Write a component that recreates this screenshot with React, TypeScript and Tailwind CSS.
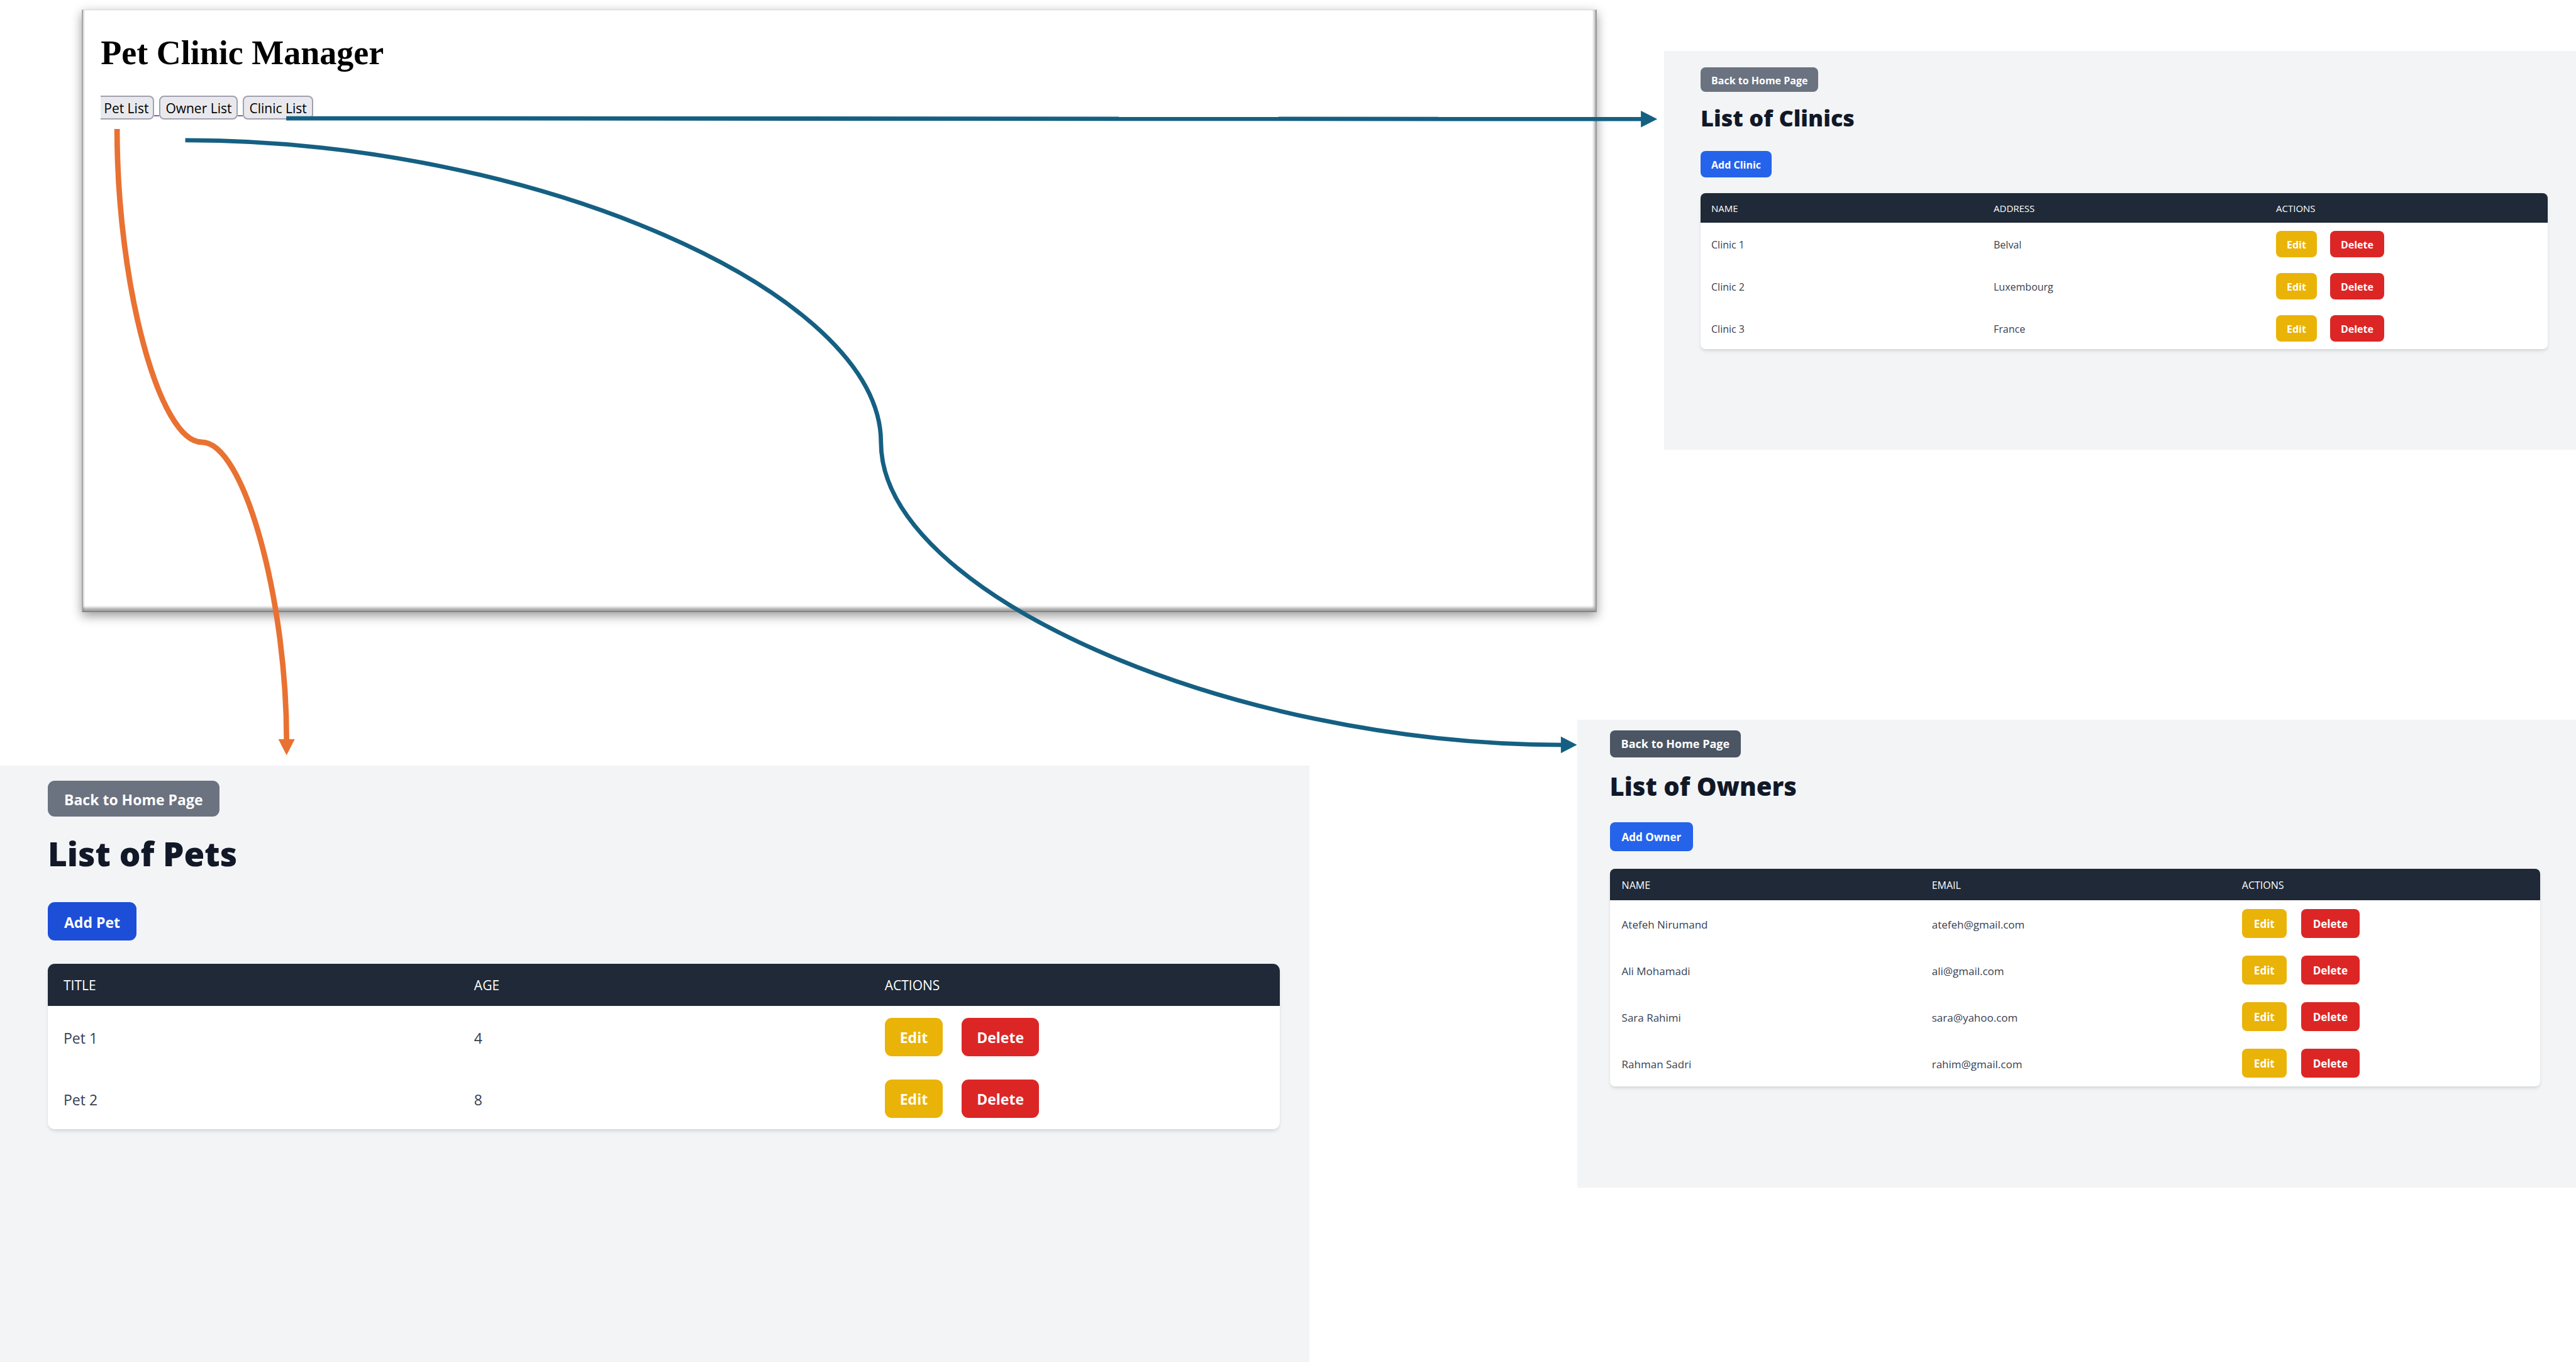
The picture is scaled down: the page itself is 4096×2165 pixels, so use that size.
type Scale = {
  panel: string;
  back: string;
  title: string;
  add: string;
  table: string;
  th: string;
  td: string;
  actionCell: string;
  actions: string;
  action: string;
};

type ListPageProps = {
  title: string;
  addLabel: string;
  columns: string[];
  rows: string[][];
  size: Scale;
};

const clinicSize: Scale = {
  panel: "w-[35.4%] min-h-[634px] mt-[81px] pt-[26px] pl-[58px] pr-[45px]",
  back: "h-[39px] px-[17px] pt-[2px] text-[16px] rounded-[8px] bg-[#6b7280]",
  title: "mt-[18px] text-[36px] leading-[48px]",
  add: "mt-[28px] h-[42px] px-[17px] pt-[2px] text-[16px] rounded-[8px] bg-[#2563eb]",
  table: "mt-[25px] rounded-[8px]",
  th: "h-[47px] px-[17px] pt-[2px] text-[15px]",
  td: "h-[67px] px-[17px] pt-[3px] text-[16px]",
  actionCell: "h-[67px] px-[17px]",
  actions: "gap-[21px]",
  action: "h-[42px] px-[17px] pt-[2px] text-[16px] rounded-[8px]",
};

const ownerSize: Scale = {
  panel: "w-[38.78%] min-h-[744px] pt-[17px] pl-[52px] pr-[57px]",
  back: "h-[43px] px-[18px] text-[18px] rounded-[8px] bg-[#4b5563]",
  title: "mt-[21px] text-[40px] leading-[50px]",
  add: "mt-[32px] h-[46px] px-[19px] pt-[2px] text-[17px] rounded-[8px] bg-[#2563eb]",
  table: "mt-[28px] rounded-[8px]",
  th: "h-[50px] px-[19px] pt-[2px] text-[16px]",
  td: "h-[74px] px-[19px] pt-[3px] text-[17px]",
  actionCell: "h-[74px] px-[19px]",
  actions: "gap-[23px]",
  action: "h-[46px] px-[19px] pt-[2px] text-[17px] rounded-[8px]",
};

const petSize: Scale = {
  panel: "w-[50.82%] min-h-[948px] mt-[73px] pt-[24px] pl-[76px] pr-[47px]",
  back: "h-[57px] px-[26px] pt-[3px] text-[23px] rounded-[11px] bg-[#6b7280]",
  title: "mt-[26px] text-[53px] leading-[66px]",
  add: "mt-[44px] h-[61px] px-[26px] pt-[3px] text-[23px] rounded-[11px] bg-[#1d4ed8]",
  table: "mt-[37px] rounded-[11px]",
  th: "h-[67px] px-[25px] pt-[3px] text-[21px]",
  td: "h-[98px] px-[25px] pt-[4px] text-[23px]",
  actionCell: "h-[98px] px-[25px]",
  actions: "gap-[30px]",
  action: "h-[61px] px-[24px] pt-[3px] text-[23px] rounded-[11px]",
};

function ListPage({ title, addLabel, columns, rows, size }: ListPageProps) {
  return (
    <section
      className={`flex flex-col items-start bg-[#f3f4f6] font-['Open_Sans',sans-serif] ${size.panel}`}
    >
      <button type="button" className={`font-bold text-white ${size.back}`}>
        Back to Home Page
      </button>
      <h2 className={`font-['Noto_Sans',sans-serif] font-black text-[#111827] ${size.title}`}>
        {title}
      </h2>
      <button type="button" className={`font-bold text-white ${size.add}`}>
        {addLabel}
      </button>
      <div className={`w-full overflow-hidden bg-white shadow-md ${size.table}`}>
        <table className="w-full table-fixed text-left">
          <thead className="bg-[#1f2937] text-white uppercase">
            <tr>
              {columns.map((column) => (
                <th key={column} scope="col" className={`font-normal ${size.th}`}>
                  {column}
                </th>
              ))}
            </tr>
          </thead>
          <tbody className="text-[#374151]">
            {rows.map((row) => (
              <tr key={row[0]}>
                {row.map((cell) => (
                  <td key={cell} className={size.td}>
                    {cell}
                  </td>
                ))}
                <td className={size.actionCell}>
                  <div className={`flex ${size.actions}`}>
                    <button
                      type="button"
                      className={`bg-[#eab308] font-bold text-white ${size.action}`}
                    >
                      Edit
                    </button>
                    <button
                      type="button"
                      className={`bg-[#dc2626] font-bold text-white ${size.action}`}
                    >
                      Delete
                    </button>
                  </div>
                </td>
              </tr>
            ))}
          </tbody>
        </table>
      </div>
    </section>
  );
}

function HomePage() {
  const button =
    "h-[38px] border-2 border-[#a0a0ae] bg-[#e9e9ed] pt-[2px] text-[21px] leading-[30px] text-black";
  return (
    <section className="mt-[15px] ml-[3.18%] min-h-[958px] w-[58.8%] border-t border-r-2 border-b-2 border-l-2 border-t-[#d9d9d9] border-r-[#999999] border-b-[#858585] border-l-[#a6a6a6] bg-white pt-[37px] pl-[28px] shadow-[0_6px_16px_rgba(0,0,0,0.4),inset_-2px_-5px_4px_rgba(0,0,0,0.35),inset_2px_0_2px_rgba(0,0,0,0.12)]">
      <h1 className="font-['Liberation_Serif',serif] text-[54px] leading-[62px] font-bold text-black">
        Pet Clinic Manager
      </h1>
      <nav className="mt-[37px] flex font-['Open_Sans',sans-serif]">
        <button type="button" className={`rounded-r-[8px] border-l-0 pr-[7px] pl-[5px] ${button}`}>
          Pet List
        </button>
        <span className="mb-[5px] w-[8px] border-b-2 border-[#8a5bb0]" />
        <button type="button" className={`rounded-[8px] px-[8px] ${button}`}>
          Owner List
        </button>
        <span className="mb-[5px] w-[8px] border-b-2 border-[#8a5bb0]" />
        <button type="button" className={`rounded-[8px] px-[8px] ${button}`}>
          Clinic List
        </button>
      </nav>
    </section>
  );
}

/* Connectors from the home page buttons to the pages they open. */
function Connectors() {
  return (
    <svg
      viewBox="0 0 4234 2238"
      preserveAspectRatio="none"
      fill="none"
      aria-hidden="true"
      className="pointer-events-none absolute inset-0 h-full w-full"
    >
      <path d="M470.5 194.4 L2700 195.6" stroke="#156082" strokeWidth="7" />
      <path d="M2697 182 L2724 195.7 L2697 209.4 Z" fill="#156082" />
      <path
        d="M304.5 230.4 C876 230.4 1448 479 1448 727 C1448 975 2020 1224 2568 1224"
        stroke="#156082"
        strokeWidth="7"
      />
      <path d="M2565.5 1210.3 L2592 1224 L2565.5 1237.7 Z" fill="#156082" />
      <path
        d="M192.4 212 C192.4 469 262 726.5 331.6 726.5 C401 726.5 471 984 471 1216"
        stroke="#e97132"
        strokeWidth="9"
      />
      <path d="M457.5 1214.5 L484.5 1214.5 L471 1241 Z" fill="#e97132" />
    </svg>
  );
}

export default function App() {
  return (
    <main className="relative flex min-h-screen flex-col justify-between overflow-hidden bg-white">
      <div className="flex items-start justify-between">
        <HomePage />
        <ListPage
          title="List of Clinics"
          addLabel="Add Clinic"
          columns={["Name", "Address", "Actions"]}
          rows={[
            ["Clinic 1", "Belval"],
            ["Clinic 2", "Luxembourg"],
            ["Clinic 3", "France"],
          ]}
          size={clinicSize}
        />
      </div>
      <div className="flex items-start justify-between">
        <ListPage
          title="List of Pets"
          addLabel="Add Pet"
          columns={["Title", "Age", "Actions"]}
          rows={[
            ["Pet 1", "4"],
            ["Pet 2", "8"],
          ]}
          size={petSize}
        />
        <ListPage
          title="List of Owners"
          addLabel="Add Owner"
          columns={["Name", "Email", "Actions"]}
          rows={[
            ["Atefeh Nirumand", "atefeh@gmail.com"],
            ["Ali Mohamadi", "ali@gmail.com"],
            ["Sara Rahimi", "sara@yahoo.com"],
            ["Rahman Sadri", "rahim@gmail.com"],
          ]}
          size={ownerSize}
        />
      </div>
      <Connectors />
    </main>
  );
}
